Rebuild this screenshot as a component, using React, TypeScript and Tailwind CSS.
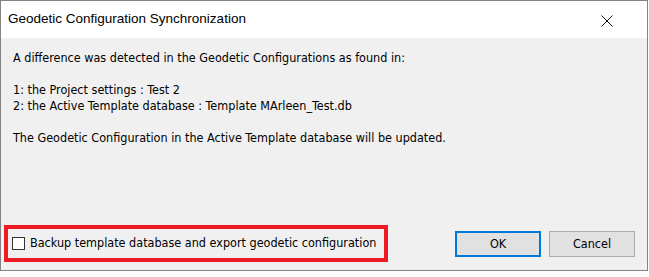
import React from "react";

export default function App() {
  const body = { fontFamily: '"DejaVu Sans Condensed", "DejaVu Sans", Tahoma, sans-serif' };
  return (
    <div className="w-[649px] h-[277px] bg-white">
      <div className="w-[648px] h-[271px] border border-[#838383] flex flex-col">
        <div
          className="h-[37px] bg-white flex items-center justify-between pl-[7px] pr-[34px]"
        >
          <span
            className="text-[13.5px] text-black"
            style={{ fontFamily: '"Liberation Sans", Arial, sans-serif' }}
          >
            Geodetic Configuration Synchronization
          </span>
          <svg width="12" height="12" viewBox="0 0 12 12" className="mt-[2px]">
            <path d="M0.5 0.5 L11.5 11.5 M11.5 0.5 L0.5 11.5" stroke="#111" strokeWidth="1" fill="none" />
          </svg>
        </div>
        <div className="flex-1 bg-[#f0f0f0] flex flex-col" style={body}>
          <div className="flex-1 pt-[12px] pl-[12px] text-[12.5px] leading-[16px] text-black">
            <div>A difference was detected in the Geodetic Configurations as found in:</div>
            <div className="h-[16px]" />
            <div>1: the Project settings : Test 2</div>
            <div>2: the Active Template database : Template MArleen_Test.db</div>
            <div className="h-[16px]" />
            <div>The Geodetic Configuration in the Active Template database will be updated.</div>
          </div>
          <div className="flex items-center justify-between pl-[3px] pr-[12px] pb-[8px]">
            <div className="w-[384px] h-[37px] border-[4px] border-[#ed1c24] flex items-center pl-[4px]">
              <div className="w-[13px] h-[13px] border border-[#333333] bg-white" />
              <span className="ml-[5px] text-[12.5px] text-black whitespace-nowrap">
                Backup template database and export geodetic configuration
              </span>
            </div>
            <div className="flex gap-[8px] mt-[1px]">
              <button className="w-[86px] h-[26px] bg-[#e1e1e1] border-2 border-[#0078d7] text-[12.5px] text-black">
                OK
              </button>
              <button className="w-[86px] h-[26px] bg-[#e1e1e1] border border-[#adadad] text-[12.5px] text-black">
                Cancel
              </button>
            </div>
          </div>
        </div>
      </div>
    </div>
  );
}
